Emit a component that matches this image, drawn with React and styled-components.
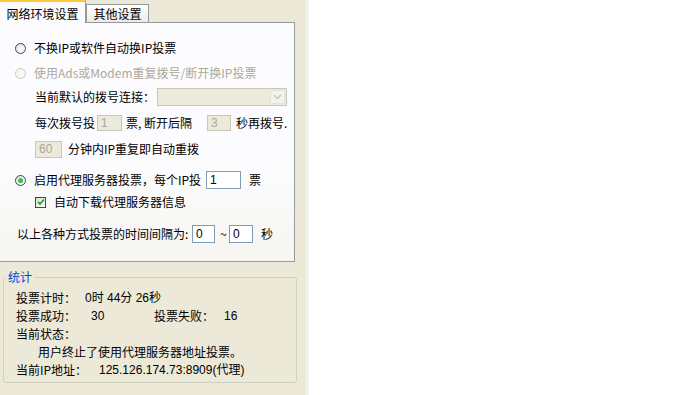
import React from "react";
import styled, { createGlobalStyle } from "styled-components";

const GlobalStyle = createGlobalStyle`
  body {
    margin: 0;
    background: #ffffff;
    font-family: "Noto Sans CJK SC", "Liberation Sans", sans-serif;
    font-size: 12px;
  }
`;

const Window = styled.div`
  width: 306px;
  height: 395px;
  background: #ece9d8;
  border-right: 3px solid #f4f3ee;
  overflow: hidden;
  color: #000;
`;

const TabStrip = styled.div`
  display: flex;
  align-items: flex-end;
  height: 22px;
`;

const Tab = styled.div`
  position: relative;
  z-index: 1;
  box-sizing: border-box;
  display: flex;
  align-items: center;
  justify-content: center;
  height: ${(p) => (p.$active ? "23px" : "18px")};
  width: ${(p) => p.$w}px;
  margin-bottom: ${(p) => (p.$active ? "-1px" : "0")};
  border: 1px solid #919b9c;
  border-bottom: none;
  border-left: ${(p) => (p.$active ? "none" : "1px solid #919b9c")};
  border-top: ${(p) => (p.$active ? "2px solid #ffc83c" : "1px solid #919b9c")};
  background: ${(p) =>
    p.$active ? "#fcfcfe" : "linear-gradient(#ffffff, #ecebe6)"};
  font-size: 12px;
  line-height: 14px;
  padding-top: ${(p) => (p.$active ? "2px" : "0")};
`;

const TabPage = styled.div`
  box-sizing: border-box;
  width: 295px;
  height: 240px;
  border: 1px solid #919b9c;
  border-left: none;
  background: linear-gradient(#fcfcfe 60%, #f6f5f0);
  padding-top: 15px;
  display: flex;
  flex-direction: column;
`;

const Row = styled.div`
  display: flex;
  align-items: center;
  height: 20px;
  margin-top: ${(p) => p.$mt || 0}px;
  padding-left: ${(p) => p.$pl || 0}px;
  line-height: 14px;
  white-space: nowrap;
`;

const Text = styled.span`
  display: inline-block;
  width: ${(p) => (p.$w ? `${p.$w}px` : "auto")};
  margin-left: ${(p) => p.$ml || 0}px;
  color: ${(p) => (p.$disabled ? "#aca899" : "#000")};
  flex-shrink: 0;
`;

const Radio = styled.span`
  box-sizing: border-box;
  width: 11px;
  height: 11px;
  border-radius: 50%;
  border: 1px solid ${(p) => (p.$disabled ? "#cac8bb" : "#1c5180")};
  background: ${(p) =>
    p.$disabled ? "#f8f8f4" : "radial-gradient(circle at 65% 65%, #ffffff, #dcdcd7)"};
  display: flex;
  align-items: center;
  justify-content: center;
  margin-right: 8px;
  flex-shrink: 0;

  &::after {
    content: "";
    display: ${(p) => (p.$checked ? "block" : "none")};
    width: 5px;
    height: 5px;
    border-radius: 50%;
    background: radial-gradient(circle at 35% 35%, #55d055, #21a121);
  }
`;

const Check = styled.span`
  box-sizing: border-box;
  width: 11px;
  height: 11px;
  border: 1px solid #1c5180;
  background: linear-gradient(135deg, #dcdcd7, #ffffff);
  margin-right: 8px;
  display: flex;
  align-items: center;
  justify-content: center;
  flex-shrink: 0;
`;

const Field = styled.span`
  box-sizing: border-box;
  display: inline-flex;
  align-items: center;
  width: ${(p) => p.$w}px;
  height: ${(p) => p.$h || 16}px;
  margin-left: ${(p) => p.$ml || 0}px;
  margin-right: ${(p) => p.$mr || 0}px;
  padding-left: 3px;
  border: 1px solid ${(p) => (p.$disabled ? "#c9c7ba" : "#7f9db9")};
  background: ${(p) => (p.$disabled ? "#ebeadb" : "#ffffff")};
  color: ${(p) => (p.$disabled ? "#aca899" : "#000")};
  font-family: "Liberation Sans", sans-serif;
  font-size: 12px;
  flex-shrink: 0;
`;

const Combo = styled.span`
  box-sizing: border-box;
  display: flex;
  justify-content: flex-end;
  align-items: center;
  width: 130px;
  height: 18px;
  margin-left: 2px;
  padding-right: 1px;
  border: 1px solid #c9c7ba;
  background: #ebeadb;
`;

const ComboButton = styled.span`
  box-sizing: border-box;
  width: 15px;
  height: 14px;
  border: 1px solid #e4e2d6;
  border-radius: 2px;
  background: #f4f3ee;
  display: flex;
  align-items: center;
  justify-content: center;
`;

const GroupBox = styled.fieldset`
  box-sizing: border-box;
  width: 294px;
  height: 113px;
  margin: 8px 0 0 3px;
  padding: 5px 0 0 12px;
  border: 1px solid #d0d0bf;
  border-radius: 3px;
`;

const Legend = styled.legend`
  color: #0046d5;
  padding: 0 2px;
  margin-left: -10px;
  line-height: 14px;
`;

const StatRow = styled.div`
  display: flex;
  align-items: center;
  height: 18px;
  padding-left: ${(p) => p.$pl || 0}px;
  line-height: 14px;
  white-space: nowrap;
`;

const Value = styled.span`
  display: inline-block;
  width: ${(p) => (p.$w ? `${p.$w}px` : "auto")};
  font-family: "Liberation Sans", "Noto Sans CJK SC", sans-serif;
  flex-shrink: 0;
`;

function Chevron() {
  return (
    <svg width="9" height="6" viewBox="0 0 9 6">
      <path d="M1 1 L4.5 4.5 L8 1" fill="none" stroke="#c9c7ba" strokeWidth="1.5" />
    </svg>
  );
}

function Tick() {
  return (
    <svg width="8" height="8" viewBox="0 0 8 8">
      <path d="M1 3.8 L3 6 L7 1.5" fill="none" stroke="#21a121" strokeWidth="1.8" />
    </svg>
  );
}

export default function App() {
  return (
    <>
      <GlobalStyle />
      <Window>
        <TabStrip>
          <Tab $active $w={86}>网络环境设置</Tab>
          <Tab $w={63}>其他设置</Tab>
        </TabStrip>
        <TabPage>
          <Row $pl={15}>
            <Radio />
            <Text>不换IP或软件自动换IP投票</Text>
          </Row>
          <Row $pl={15} $mt={5}>
            <Radio $disabled />
            <Text $disabled>使用Ads或Modem重复拨号/断开换IP投票</Text>
          </Row>
          <Row $pl={35} $mt={4}>
            <Text $w={120}>当前默认的拨号连接：</Text>
            <Combo>
              <ComboButton>
                <Chevron />
              </ComboButton>
            </Combo>
          </Row>
          <Row $pl={35} $mt={6}>
            <Text $w={62}>每次拨号投</Text>
            <Field $disabled $w={25}>1</Field>
            <Text $ml={4} $w={81}>票, 断开后隔</Text>
            <Field $disabled $w={24}>3</Field>
            <Text $ml={5}>秒再拨号.</Text>
          </Row>
          <Row $pl={35} $mt={6}>
            <Field $disabled $w={27} $h={17}>60</Field>
            <Text $ml={6}>分钟内IP重复即自动重拨</Text>
          </Row>
          <Row $pl={15} $mt={11}>
            <Radio $checked />
            <Text $w={172}>启用代理服务器投票，每个IP投</Text>
            <Field $w={35} $h={18}>1</Field>
            <Text $ml={8}>票</Text>
          </Row>
          <Row $pl={35} $mt={2}>
            <Check>
              <Tick />
            </Check>
            <Text>自动下载代理服务器信息</Text>
          </Row>
          <Row $pl={17} $mt={12}>
            <Text $w={175}>以上各种方式投票的时间间隔为:</Text>
            <Field $w={23} $h={18}>0</Field>
            <Text $ml={5} $w={9}>~</Text>
            <Field $w={24} $h={18}>0</Field>
            <Text $ml={8}>秒</Text>
          </Row>
        </TabPage>
        <GroupBox>
          <Legend>统计</Legend>
          <StatRow>
            <Text $w={69}>投票计时：</Text>
            <Value>0时 44分 26秒</Value>
          </StatRow>
          <StatRow>
            <Text $w={75}>投票成功：</Text>
            <Value $w={63}>30</Value>
            <Text $w={70}>投票失败：</Text>
            <Value>16</Value>
          </StatRow>
          <StatRow>
            <Text>当前状态：</Text>
          </StatRow>
          <StatRow $pl={22}>
            <Text>用户终止了使用代理服务器地址投票。</Text>
          </StatRow>
          <StatRow>
            <Text $w={83}>当前IP地址：</Text>
            <Value>125.126.174.73:8909(代理)</Value>
          </StatRow>
        </GroupBox>
      </Window>
    </>
  );
}
